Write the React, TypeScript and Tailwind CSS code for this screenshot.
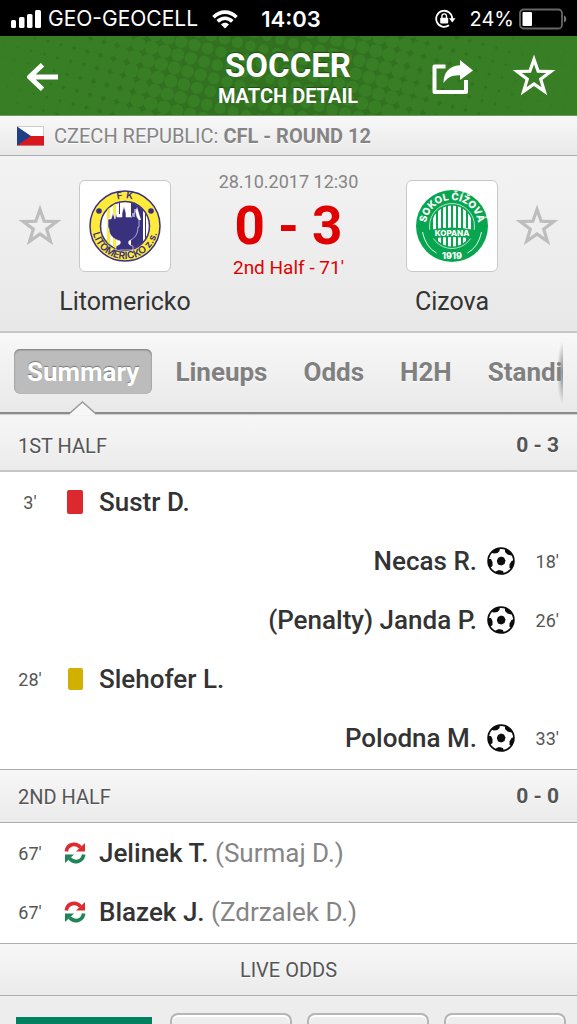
import type { ReactNode } from "react";

function starPath(radius: number) {
  const points: string[] = [];
  for (let i = 0; i < 10; i++) {
    const r = i % 2 === 0 ? radius : radius * 0.4;
    const a = (Math.PI / 5) * i - Math.PI / 2;
    points.push(`${(23 + r * Math.cos(a)).toFixed(2)} ${(23 + r * Math.sin(a)).toFixed(2)}`);
  }
  return `M${points.join("L")}Z`;
}

function StarIcon() {
  return (
    <svg viewBox="0 0 46 46" className="size-[46px]" fill="currentColor" fillRule="evenodd" aria-hidden="true">
      <path d={starPath(22.5) + starPath(12.8)} />
    </svg>
  );
}

function Halftone() {
  const dots: { x: number; y: number; r: number }[] = [];
  const step = 13.6;
  const angle = 0.26;
  for (let i = -30; i < 50; i++) {
    for (let j = -30; j < 50; j++) {
      const x = (i * Math.cos(angle) - j * Math.sin(angle)) * step;
      const y = (i * Math.sin(angle) + j * Math.cos(angle)) * step;
      if (x < -10 || x > 590 || y < -10 || y > 90) continue;
      const d = Math.min(1, Math.abs(x - 270) / 270);
      dots.push({ x, y, r: 5 + 4.5 * d });
    }
  }
  return (
    <svg viewBox="0 0 577 80" preserveAspectRatio="xMidYMid slice" className="absolute inset-0 size-full" aria-hidden="true">
      <rect width="577" height="80" fill="#31711f" />
      <g fill="#377e25">
        {dots.map((p, i) => (
          <circle key={i} cx={p.x.toFixed(1)} cy={p.y.toFixed(1)} r={p.r.toFixed(2)} />
        ))}
      </g>
    </svg>
  );
}

function StatusBar() {
  return (
    <div className="grid h-9 shrink-0 grid-cols-[1fr_auto_1fr] items-center bg-black pt-0.5 pr-2.5 pl-[11px] font-['Inter',sans-serif] text-[21px] text-white">
      <div className="flex items-center gap-1.5">
        <svg viewBox="0 0 31 18" className="h-[18px] w-[31px]" fill="currentColor" aria-hidden="true">
          <rect x="0" y="10" width="5" height="8" rx="1.5" />
          <rect x="8" y="7" width="5.5" height="11" rx="1.5" />
          <rect x="16" y="4" width="5.5" height="14" rx="1.5" />
          <rect x="24" y="0" width="6" height="18" rx="1.5" />
        </svg>
        <span className="whitespace-nowrap">GEO-GEOCELL</span>
        <svg viewBox="0 0 26 19" className="ml-2 h-[19px] w-[26px]" fill="none" stroke="currentColor" strokeWidth="3.6" aria-hidden="true">
          <path d="M1.5 7.2C8 .4 18 .4 24.500 7.200" />
          <path d="M5.700 11.400C10 7.200 16 7.200 20.300 11.400" />
          <path d="M13 18.500 9 14.500C11.300 12.300 14.700 12.300 17 14.500Z" fill="currentColor" stroke="none" />
        </svg>
      </div>
      <span className="pl-1 text-[22px] font-semibold">14:03</span>
      <div className="flex items-center justify-end gap-[5px]">
        <svg viewBox="0 0 22 20" className="mr-2 h-5 w-[22px]" aria-hidden="true">
          <path d="M17.200 10A8 8 0 1 0 14 16.200" fill="none" stroke="currentColor" strokeWidth="1.800" />
          <path d="M14 9.200h6.500l-3.200 4.300z" fill="currentColor" />
          <rect x="5.200" y="8.800" width="8" height="5.600" rx=".8" fill="currentColor" />
          <path d="M6.900 9V7.200a2.300 2.300 0 0 1 4.600 0V9" fill="none" stroke="currentColor" strokeWidth="1.400" />
        </svg>
        <span className="text-[20px]">24%</span>
        <svg viewBox="0 0 48 22" className="h-[22px] w-12" aria-hidden="true">
          <rect x="1" y="1.500" width="42" height="19" rx="3.500" fill="none" stroke="#666" strokeWidth="1.800" />
          <path d="M45 7.500c3 1 3 6 0 7z" fill="#777" />
          <rect x="3.500" y="4" width="9.500" height="14" rx="1" fill="#fff" />
        </svg>
      </div>
    </div>
  );
}

function Header() {
  return (
    <header className="relative flex h-20 shrink-0 items-center justify-between overflow-hidden border-b border-[#6f9664] px-5 pt-[3px] text-white">
      <Halftone />
      <button type="button" aria-label="Back" className="relative flex h-12 w-[124px] items-center pl-1.5">
        <svg viewBox="0 0 32 28" className="h-7 w-8" fill="none" stroke="currentColor" strokeWidth="5" aria-hidden="true">
          <path d="M16.500 1.800 3.500 14 16.500 26.200M4 14H32" strokeLinejoin="round" />
        </svg>
      </button>
      <h1 className="relative pt-[3px] text-center leading-none font-bold [text-shadow:0_-1px_1px_#1c4a10]">
        <span className="block text-[33px] leading-[35px]">SOCCER</span>
        <span className="block text-[20px] leading-[26px]">MATCH DETAIL</span>
      </h1>
      <div className="relative flex w-[125px] items-center justify-between">
        <button type="button" aria-label="Share" className="flex h-12 items-center">
          <svg viewBox="0 0 42 36" className="h-9 w-[42px]" fill="currentColor" aria-hidden="true">
            <path d="M13.500 7.500H2.500V33H34V21" fill="none" stroke="currentColor" strokeWidth="4" strokeLinejoin="round" />
            <path d="M28 1 41 11.500 28 21V16.200C20 15.800 15.500 18.500 11.500 24C11.500 14 17 6.500 28 6.200Z" />
          </svg>
        </button>
        <button type="button" aria-label="Add match to favourites">
          <StarIcon />
        </button>
      </div>
    </header>
  );
}

function CzechFlag() {
  return (
    <svg viewBox="0 0 27 20" className="h-5 w-[27px]" aria-hidden="true">
      <rect x=".5" y=".5" width="26" height="19" fill="#fff" stroke="#ccc" />
      <path d="M0 10H27V19.500H0Z" fill="#d7191d" />
      <path d="M0 .5 14 10 0 19.500Z" fill="#1f3f86" />
    </svg>
  );
}

function LitomerickoCrest() {
  return (
    <svg viewBox="0 0 72 72" className="size-[72px]" role="img" aria-label="FK Litomericko crest">
      <defs>
        <path id="lit-top" d="M8.500 36a27.500 27.500 0 0 1 55 0" />
        <path id="lit-bottom" d="M3.500 30.300A33 33 0 1 0 68.500 30.300" />
        <clipPath id="lit-inner"><circle cx="36" cy="36" r="24" /></clipPath>
      </defs>
      <circle cx="36" cy="36" r="35" fill="#fdea3b" stroke="#39307e" strokeWidth="1.500" />
      <circle cx="36" cy="36" r="24.500" fill="#fff" stroke="#39307e" strokeWidth="1.500" />
      <g clipPath="url(#lit-inner)">
        <path d="M18 12h3v48h-3zM24 12h3v48h-3z" fill="#fdea3b" />
        <path d="M42 10h12v52h-12zM56 10h1v52h-1z" fill="#39307e" />
        <path d="M30 12h1v12h-1z" fill="#39307e" />
        <path d="m44 30 4-13 4 13z" fill="#fff" />
      </g>
      <path d="M19 37V29h3l2-6 2 6 1-6 1 4h5v-4l2-7 2 7v4h6l1-4 1 4 1-8 2 8 2 3v7h-1c0 9-5 12-9 14-1 3 0 4 4 5v4H27v-4c4-1 5-3 4-5-7-2-11-6-11-12Z" fill="#39307e" stroke="#fff" strokeWidth=".6" />
      <circle cx="10" cy="21" r="2.800" fill="#39307e" />
      <circle cx="62" cy="21" r="2.800" fill="#39307e" />
      <g fill="#39307e" fontFamily="Inter, sans-serif" fontWeight="600" textAnchor="middle">
        <text fontSize="10"><textPath href="#lit-top" startOffset="50%">F K</textPath></text>
        <text fontSize="10"><textPath href="#lit-bottom" startOffset="50%">LITOMĚRICKO z.s.</textPath></text>
      </g>
    </svg>
  );
}

function CizovaCrest() {
  const bars = [17, 22, 27, 32, 37, 42, 47, 52];
  return (
    <svg viewBox="0 0 72 72" className="size-[72px] overflow-visible" role="img" aria-label="Sokol Cizova crest">
      <defs>
        <path id="ciz-top" d="M10.200 40A26.100 26.100 0 1 1 61.800 40" />
        <clipPath id="ciz-inner"><circle cx="36" cy="36" r="20.500" /></clipPath>
      </defs>
      <circle cx="36" cy="36" r="36" fill="#08a550" />
      <circle cx="36" cy="36" r="22.500" fill="none" stroke="#fff" strokeWidth=".7" />
      <g clipPath="url(#ciz-inner)">
        {bars.map((x) => (
          <rect key={x} x={x} y="12" width="3" height="48" fill="#fff" />
        ))}
      </g>
      <path d="M13 40q23-5 46 0v9q-23-4-46 0z" fill="#08a550" />
      <path d="M6.500 42q3 15 14 21M65.500 42q-3 15-14 21" fill="none" stroke="#fff" strokeWidth=".9" />
      <g fill="#fff" fontFamily="Inter, sans-serif" fontWeight="800" textAnchor="middle">
        <text fontSize="10"><textPath href="#ciz-top" startOffset="50%">SOKOL ČÍŽOVÁ</textPath></text>
        <text x="36" y="46" fontSize="8">KOPANÁ</text>
        <text x="36" y="69" fontSize="9">1919</text>
      </g>
    </svg>
  );
}

function Team({ name, crest }: { name: string; crest: ReactNode }) {
  return (
    <div className="flex w-[134px] flex-col items-center">
      <div className="flex size-[92px] items-center justify-center rounded-md border border-[#c8c8c8] bg-white">{crest}</div>
      <span className="mt-3.5 text-[25px] leading-8 text-[#333]">{name}</span>
    </div>
  );
}

function FavouriteTeam({ name }: { name: string }) {
  return (
    <button type="button" aria-label={`Add ${name} to favourites`} className="mt-6 text-[#bdbdbd]">
      <StarIcon />
    </button>
  );
}

function MatchInfo() {
  return (
    <section className="flex h-[177px] shrink-0 items-start justify-between border-b-2 border-[#c6c6c6] bg-linear-to-b from-[#f3f3f3] to-[#e8e8e8] px-[17px] pt-6">
      <div className="flex items-start">
        <FavouriteTeam name="Litomericko" />
        <div className="-ml-[5px]"><Team name="Litomericko" crest={<LitomerickoCrest />} /></div>
      </div>
      <div className="-mt-2.5 flex flex-col items-center whitespace-nowrap">
        <time className="text-[18px] leading-6 text-[#858585]">28.10.2017 12:30</time>
        <strong className="mt-1.5 text-[53px] leading-[52px] text-[#e00000]">0 - 3</strong>
        <span className="mt-1 text-[19px] leading-6 text-[#e00000]">2nd Half - 71'</span>
      </div>
      <div className="flex items-start">
        <div className="-mr-[5px]"><Team name="Cizova" crest={<CizovaCrest />} /></div>
        <FavouriteTeam name="Cizova" />
      </div>
    </section>
  );
}

const tabs = ["Summary", "Lineups", "Odds", "H2H", "Standings"];

function Tabs() {
  return (
    <nav className="relative h-[81px] shrink-0 border-b-2 border-[#8b8b8b] bg-linear-to-b from-[#f8f8f8] to-[#e9e9e9] pt-4 pr-[15px] pl-3.5">
      <div className="flex gap-2.5 overflow-hidden">
        {tabs.map((tab, i) => (
          <button
            key={tab}
            type="button"
            className={
              i === 0
                ? "h-[45px] shrink-0 rounded-md bg-[#bcbcbc] px-[13px] pt-0.5 text-[26px] font-bold text-white shadow-[inset_0_1px_2px_#777,0_1px_0_#fff] [text-shadow:0_-1px_1px_#777]"
                : "h-[45px] shrink-0 px-[13px] pt-0.5 text-[26px] font-bold text-[#808080] [text-shadow:0_1px_0_#fff]"
            }
          >
            {tab}
          </button>
        ))}
      </div>
      <div className="absolute top-2 right-[14px] h-16 w-1.5 bg-[radial-gradient(ellipse_at_right,#888_0%,transparent_70%)]" />
      <svg viewBox="0 0 26 14" className="absolute -bottom-[3px] left-[70px] h-3.5 w-[26px]" aria-hidden="true">
        <path d="M0 14V12.500L12.500 1 25 12.500V14Z" fill="#f7f7f7" />
        <path d="M0 12 12.500 1 25 12" fill="none" stroke="#999" strokeWidth="1.500" />
      </svg>
    </nav>
  );
}

function PeriodHeading({ title, score, first }: { title: string; score: string; first?: boolean }) {
  return (
    <h2
      className={
        first
          ? "flex h-[58px] items-center justify-between border-b-2 border-[#c6c6c6] bg-linear-to-b from-[#f7f7f7] to-[#ebebeb] px-[18px] pt-[7px] text-[20px] text-[#555] shadow-[inset_0_2px_1px_-1px_#ccc] [text-shadow:0_1px_0_#fff]"
          : "flex h-[54px] items-center justify-between border-y border-[#adadad] bg-linear-to-b from-[#f7f7f7] to-[#ebebeb] px-[18px] pt-0.5 text-[20px] text-[#555] [text-shadow:0_1px_0_#fff]"
      }
    >
      <span>{title}</span>
      <span className="text-[21px] font-bold">{score}</span>
    </h2>
  );
}

function BallIcon() {
  return (
    <svg viewBox="0 0 28 28" className="size-7" aria-hidden="true">
      <defs><clipPath id="ball"><circle cx="14" cy="14" r="13" /></clipPath></defs>
      <circle cx="14" cy="14" r="12.800" fill="#fff" />
      <g clipPath="url(#ball)" fill="#0c0c0c">
        <path d="M14 9.500 17 10.500 18.500 13.500 17.500 17 14.500 18.500 11 17.500 9.800 14 11 11Z" />
        <path d="M5 3 8 0 13 0 12.500 4 10.500 6 7 6.500 5 6Z" />
        <path d="M18 2.500 23 2 27 8 24.500 8.500 20.500 7.500 18 5Z" />
        <path d="M0 12 4 12 5.500 15 5.500 19 3 21 0 20Z" />
        <path d="M28 12.500 24.500 14 22.500 17.500 22.500 21 25 22 28 20Z" />
        <path d="M8.500 24.500 12 23 16 24 17 28H8Z" />
      </g>
      <circle cx="14" cy="14" r="12.900" fill="none" stroke="#0c0c0c" strokeWidth="1.700" />
    </svg>
  );
}

function SubstitutionIcon() {
  return (
    <svg viewBox="0 0 22 22" className="size-[22px]" aria-hidden="true">
      <path d="M2.300 9.500C3.500 1.500 12 .5 16.500 5.500" fill="none" stroke="#de2b30" strokeWidth="3.600" />
      <path d="M21 1V9.500H12Z" fill="#de2b30" />
      <path d="M19.700 12.500C18.500 20.500 10 21.500 5.500 16.500" fill="none" stroke="#1d8557" strokeWidth="3.600" />
      <path d="M1 21V12.500H10Z" fill="#1d8557" />
    </svg>
  );
}

type Incident = { minute: string; player: string; note?: string; kind: "red" | "yellow" | "goal" | "sub"; away?: boolean };

const firstHalf: Incident[] = [
  { minute: "3'", player: "Sustr D.", kind: "red" },
  { minute: "18'", player: "Necas R.", kind: "goal", away: true },
  { minute: "26'", player: "(Penalty) Janda P.", kind: "goal", away: true },
  { minute: "28'", player: "Slehofer L.", kind: "yellow" },
  { minute: "33'", player: "Polodna M.", kind: "goal", away: true },
];

const secondHalf: Incident[] = [
  { minute: "67'", player: "Jelinek T.", note: "(Surmaj D.)", kind: "sub" },
  { minute: "67'", player: "Blazek J.", note: "(Zdrzalek D.)", kind: "sub" },
];

function IncidentIcon({ kind }: { kind: Incident["kind"] }) {
  if (kind === "goal") return <BallIcon />;
  if (kind === "sub") return <SubstitutionIcon />;
  if (kind === "red") return <span className="h-6 w-4 rounded-xs bg-[#dc292e]" />;
  return <span className="h-[22px] w-[15px] rounded-xs bg-[#d2b000]" />;
}

function IncidentList({ items }: { items: Incident[] }) {
  return (
    <ul className="bg-white py-px">
      {items.map((item) => (
        <li
          key={item.player}
          className={item.away ? "flex h-[59px] flex-row-reverse items-center px-[18px]" : "flex h-[59px] items-center px-[18px]"}
        >
          <span className={item.away ? "w-6 text-right text-[18px] text-[#555]" : "w-6 text-center text-[18px] text-[#555]"}>{item.minute}</span>
          <span className={item.away ? "mr-5 mb-0.5 ml-2.5 flex w-7 justify-center" : "mr-2.5 mb-0.5 ml-[19px] flex w-7 justify-center"}>
            <IncidentIcon kind={item.kind} />
          </span>
          <span className="text-[26px] font-medium text-[#333]">
            {item.player}
            {item.note && <span className="font-normal text-[#858585]"> {item.note}</span>}
          </span>
        </li>
      ))}
    </ul>
  );
}

function LiveOdds() {
  return (
    <section className="bg-[#ededed]">
      <h2 className="flex h-[53px] items-center justify-center border-y border-[#adadad] bg-linear-to-b from-[#f7f7f7] to-[#ebebeb] text-[20px] text-[#555] [text-shadow:0_1px_0_#fff]">
        LIVE ODDS
      </h2>
      <div className="flex gap-[15px] pt-[17px] pr-[11px] pl-4">
        <div className="mt-1 mr-[3px] h-12 w-[136px] shrink-0 bg-[#028161]" />
        {["1", "X", "2"].map((pick) => (
          <button
            key={pick}
            type="button"
            aria-label={`Odds ${pick}`}
            className="h-14 flex-1 rounded-lg border-2 border-[#b5b5b5] bg-[#eee] shadow-[inset_0_2px_0_#fff]"
          />
        ))}
      </div>
    </section>
  );
}

export default function App() {
  return (
    <div className="flex h-screen flex-col overflow-hidden bg-[#ededed] font-['Roboto',sans-serif]">
      <StatusBar />
      <Header />
      <main className="flex min-h-0 flex-1 flex-col overflow-y-auto [scrollbar-width:none]">
        <div className="flex h-10 shrink-0 items-center gap-2.5 border-b border-[#adadad] bg-linear-to-b from-[#f8f8f8] to-[#e9e9e9] px-[17px] pt-px text-[20px] text-[#858585] [text-shadow:0_1px_0_#fff]">
          <CzechFlag />
          <span>
            CZECH REPUBLIC: <b>CFL - ROUND 12</b>
          </span>
        </div>
        <MatchInfo />
        <Tabs />
        <div className="shrink-0">
          <PeriodHeading title="1ST HALF" score="0 - 3" first />
          <IncidentList items={firstHalf} />
          <PeriodHeading title="2ND HALF" score="0 - 0" />
          <IncidentList items={secondHalf} />
          <LiveOdds />
        </div>
      </main>
    </div>
  );
}
